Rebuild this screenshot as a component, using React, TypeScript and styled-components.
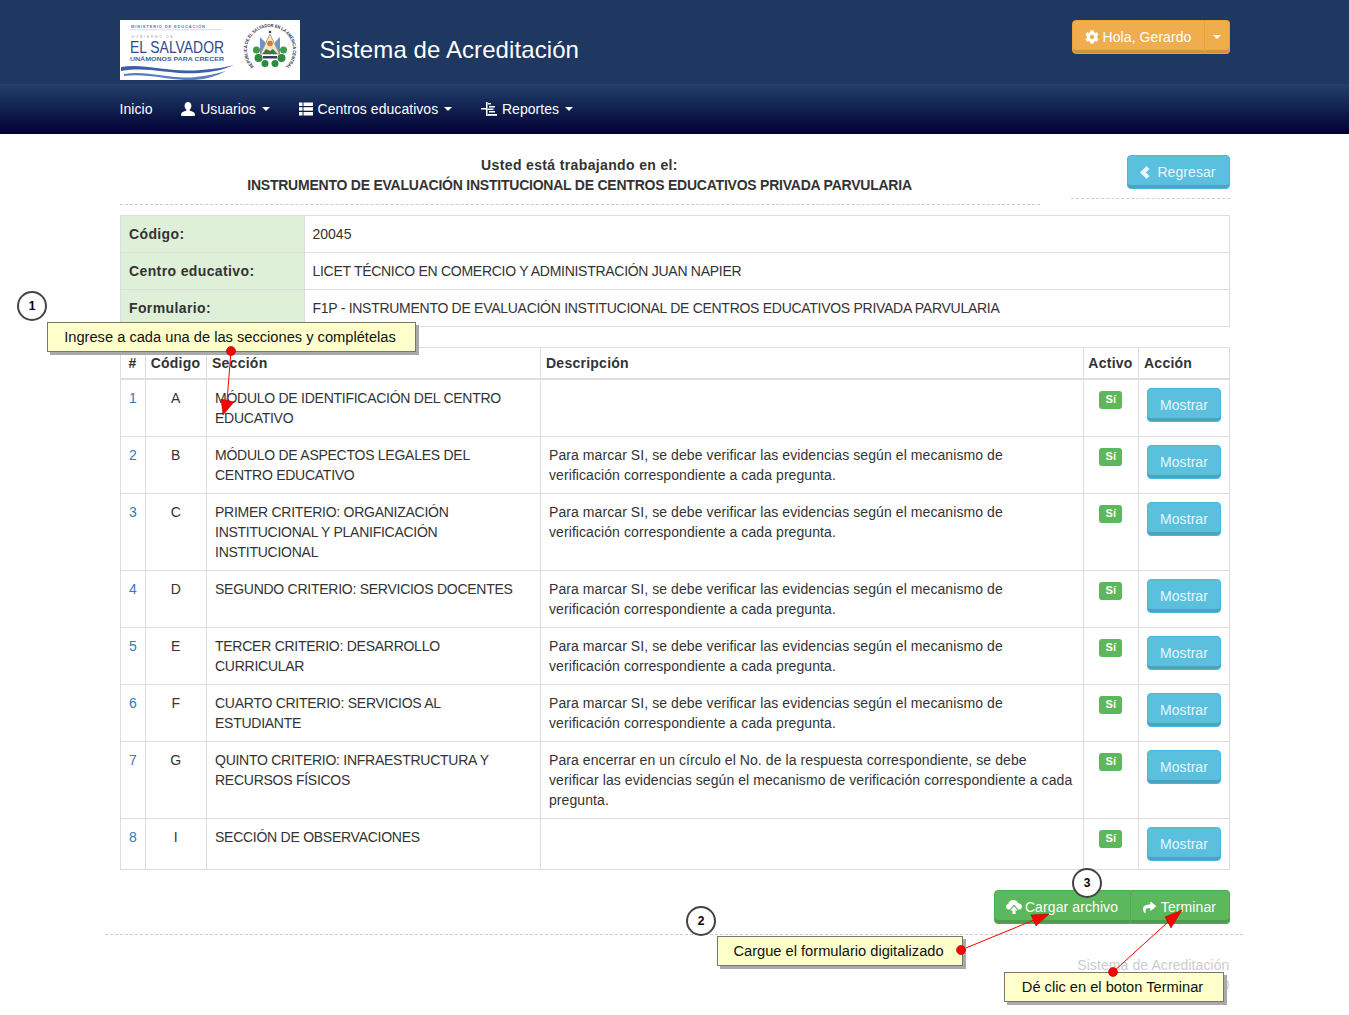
import React from "react";
import styled, { createGlobalStyle } from "styled-components";
import { FaCog, FaShare } from "react-icons/fa";

const Global = createGlobalStyle`
  html, body { margin: 0; padding: 0; background: #fff; }
  body { font-family: "Liberation Sans", Arial, sans-serif; font-size: 14px; line-height: 20px; color: #333; }
`;

const Page = styled.div`
  position: relative;
  width: 1349px;
  height: 1015px;
  overflow: hidden;
`;
const TopBar = styled.header`
  height: 84px;
  background: #1f3861;
`;
const TopInner = styled.div`
  width: 1110px;
  margin: 0 auto;
  padding-top: 20px;
  display: flex;
  align-items: flex-start;
  justify-content: space-between;
`;
const Brand = styled.div`
  display: flex;
  align-items: center;
  gap: 20px;
`;
const LogoBox = styled.svg`
  display: block;
  width: 180px;
  height: 60px;
  background: #fff;
`;
const Title = styled.h1`
  margin: 0;
  font-size: 24px;
  line-height: 60px;
  font-weight: 400;
  letter-spacing: 0.09px;
  color: #fff;
`;
const Split = styled.div`
  display: flex;
  height: 34px;
`;
const OrangePart = styled.div<{ $narrow?: boolean }>`
  height: 34px;
  box-sizing: border-box;
  display: flex;
  align-items: center;
  justify-content: center;
  gap: 4px;
  color: #fff;
  background: #f0ad4e;
  border: 1px solid #eea236;
  box-shadow: inset 0 -3px 0 rgba(0, 0, 0, 0.15);
  letter-spacing: 0.07px;
  width: ${(p) => (p.$narrow ? "25px" : "133px")};
  border-radius: ${(p) => (p.$narrow ? "0 4px 4px 0" : "4px 0 0 4px")};
  ${(p) => (p.$narrow ? "border-left: 0;" : "")}
`;
const Caret = styled.span`
  display: inline-block;
  width: 0;
  height: 0;
  border-top: 4px solid currentColor;
  border-left: 4px solid transparent;
  border-right: 4px solid transparent;
`;
const NavBar = styled.nav`
  height: 50px;
  background: linear-gradient(to bottom, #23406b 0%, #000033 100%);
`;
const NavInner = styled.div`
  width: 1110px;
  margin: 0 auto;
  height: 50px;
  display: flex;
  align-items: center;
  gap: 28.7px;
`;
const NavItem = styled.a`
  display: flex;
  align-items: center;
  gap: 5px;
  color: #fff;
  font-size: 14px;
  letter-spacing: 0.05px;
`;
const NavCaret = styled(Caret)`
  margin-left: 1px;
`;
const Main = styled.main`
  width: 1110px;
  margin: 0 auto;
`;
const HeadRow = styled.div`
  display: flex;
  justify-content: space-between;
  padding-top: 21px;
`;
const HeadText = styled.div`
  width: 920px;
  height: 49px;
  border-bottom: 1px dashed #ccc;
  text-align: center;
  font-weight: 700;
`;
const HeadLine = styled.div<{ $caps?: boolean }>`
  letter-spacing: ${(p) => (p.$caps ? "-0.23px" : "0.36px")};
`;
const HeadAction = styled.div`
  width: 159px;
  height: 43px;
  border-bottom: 1px dashed #ccc;
  display: flex;
  justify-content: flex-end;
`;
const Btn = styled.a<{ $w?: number }>`
  display: flex;
  align-items: center;
  justify-content: center;
  gap: 5px;
  box-sizing: border-box;
  height: 34px;
  width: ${(p) => p.$w ?? 74}px;
  color: #e8f6fb;
  background: #5bc0de;
  border: 1px solid #46b8da;
  border-radius: 4px;
  box-shadow: inset 0 -3px 0 rgba(0, 0, 0, 0.15);
  letter-spacing: 0.07px;
`;
const BackBtn = styled(Btn)`
  gap: 7px;
`;
const InfoTable = styled.table`
  width: 1110px;
  margin-top: 10px;
  border-collapse: collapse;
  table-layout: fixed;
  td {
    border: 1px solid #ddd;
    padding: 8px;
    height: 20px;
  }
`;
const InfoLabel = styled.td`
  width: 167px;
  background: #dff0d8;
  font-weight: 700;
  letter-spacing: 0.38px;
  && { padding-left: 8.5px; padding-right: 7.5px; }
`;
const InfoValue = styled.td<{ $caps?: boolean }>`
  letter-spacing: ${(p) => (p.$caps ? "-0.28px" : "0")};
`;
const DataTable = styled.table`
  width: 1109px;
  margin-top: 20px;
  border-collapse: collapse;
  table-layout: fixed;
  th {
    border: 1px solid #ddd;
    border-bottom-width: 2px;
    padding: 5px 5.5px;
    font-weight: 700;
    text-align: left;
    letter-spacing: 0.25px;
  }
  td {
    border: 1px solid #ddd;
    padding: 8px 8px 8px 8.5px;
    vertical-align: top;
  }
`;
const CenterTh = styled.th`
  && { text-align: center; padding-left: 0; padding-right: 0; }
`;
const CenterTd = styled.td`
  && { text-align: center; }
`;
const SectionCell = styled.td`
  letter-spacing: -0.26px;
  && { padding-right: 20px; }
`;
const DescCell = styled.td`
  letter-spacing: 0.08px;
`;
const RowLink = styled.a`
  color: #337ab7;
`;
const Badge = styled.span`
  display: block;
  box-sizing: border-box;
  width: 23px;
  height: 18px;
  margin: 3px auto 0;
  background: #5cb85c;
  color: #fff;
  border-radius: 3px;
  font-size: 11px;
  font-weight: 700;
  line-height: 16px;
  text-align: center;
`;
const Footer = styled.div`
  display: flex;
  justify-content: flex-end;
  padding-top: 20px;
`;
const GreenGroup = styled.div`
  display: flex;
`;
const GreenBtn = styled(Btn)`
  color: #fff;
  background: #5cb85c;
  border: 1px solid #4cae4c;
  letter-spacing: 0.1px;
  &:first-child { border-radius: 4px 0 0 4px; gap: 3px; }
  &:last-child { border-radius: 0 4px 4px 0; border-left: 0; }
`;
const Rule = styled.div`
  width: 1138px;
  margin: 10px 0 0 105px;
  border-top: 1px dashed #ccc;
`;
const Credits = styled.div`
  width: 1110px;
  margin: 20px auto 0;
  text-align: right;
  color: #ccc;
  line-height: 20px;
  letter-spacing: 0.09px;
`;
const Callout = styled.div<{ $x: number; $y: number; $w: number; $h: number }>`
  position: absolute;
  left: ${(p) => p.$x}px;
  top: ${(p) => p.$y}px;
  width: ${(p) => p.$w}px;
  height: ${(p) => p.$h}px;
  box-sizing: border-box;
  padding: 0 3px 1px 0;
  background: #ffffcc;
  border: 1px solid #777;
  box-shadow: 3px 3px 0 #aaa;
  color: #111;
  font-size: 14.67px;
  display: flex;
  align-items: center;
  justify-content: center;
`;
const StepCircle = styled.div<{ $x: number; $y: number }>`
  position: absolute;
  left: ${(p) => p.$x - 15}px;
  top: ${(p) => p.$y - 15}px;
  width: 30px;
  height: 30px;
  box-sizing: border-box;
  border: 2px solid #444;
  border-radius: 50%;
  background: #fff;
  color: #000;
  font-size: 12px;
  font-weight: 700;
  display: flex;
  align-items: center;
  justify-content: center;
`;
const ArrowLayer = styled.svg`
  position: absolute;
  left: 0;
  top: 0;
  width: 1349px;
  height: 1015px;
  pointer-events: none;
`;

const UserIcon = () => (
  <svg width="14" height="14" viewBox="0 0 14 14" fill="#fff">
    <path d="M7 0c2 0 3.400 1.500 3.400 3.700 0 1.600-.7 3-1.600 3.800v1.200c2.400.6 5 1.600 5 3v2.300H.2V11.700c0-1.400 2.600-2.400 5-3V7.500C4.300 6.700 3.600 5.300 3.600 3.700 3.600 1.500 5 0 7 0z" />
  </svg>
);
const ListIcon = () => (
  <svg width="14" height="14" viewBox="0 0 14 14" fill="#fff">
    <rect x="0" y="0.5" width="3.500" height="3.5" />
    <rect x="4.500" y="0.5" width="9.500" height="3.5" />
    <rect x="0" y="5.2" width="3.500" height="3.5" />
    <rect x="4.500" y="5.2" width="9.500" height="3.5" />
    <rect x="0" y="10" width="3.500" height="3.5" />
    <rect x="4.500" y="10" width="9.500" height="3.5" />
  </svg>
);
const TreeIcon = () => (
  <svg width="16" height="14" viewBox="0 0 16 14" fill="#fff">
    <rect x="5" y="0" width="1.5" height="14" />
    <rect x="0" y="6" width="5" height="1.5" />
    <rect x="6.500" y="1" width="3.500" height="1.500" />
    <rect x="8" y="4" width="6" height="1.500" />
    <rect x="6.500" y="6.500" width="6" height="1.500" />
    <rect x="8" y="9" width="6" height="1.500" />
    <rect x="6.500" y="12" width="9.500" height="1.800" />
  </svg>
);
const BackIcon = () => (
  <svg width="10" height="13" viewBox="0 0 10 13" fill="currentColor">
    <polygon points="6.500,0 9.500,3 6,6.500 9.500,10 6.500,13 0,6.500" />
  </svg>
);
const CloudIcon = () => (
  <svg width="16" height="14" viewBox="0 0 16 14" fill="#fff">
    <path d="M3.300 9.500C1.400 9.500 0 8.300 0 6.700c0-1.400 1-2.500 2.300-2.800C2.700 1.600 4.800 0 7.300 0c2.300 0 4.200 1.300 4.800 3.200 2.200.1 3.900 1.600 3.900 3.400 0 1.300-.8 2.300-2 2.900h-1.500L8 4.500 3.800 9.500z" />
    <path d="M8 6.300l3.700 4.200H9.500V14h-3v-3.500H4.300z" />
  </svg>
);
const Logo = () => (
  <LogoBox viewBox="0 0 180 60">
    <defs>
      <path id="ringPath" d="M134 46.500a23 23 0 1 1 32 0" />
    </defs>
    <text x="11" y="8" fontSize="4" fontWeight="700" fill="#6b7794" textLength="74" lengthAdjust="spacing" fontFamily="Liberation Sans">MINISTERIO DE EDUCACIÓN</text>
    <rect x="10" y="9.500" width="92" height="0.700" fill="#c3cbe0" />
    <text x="11" y="18" fontSize="3.600" fill="#9aa1b4" textLength="42" lengthAdjust="spacing" fontFamily="Liberation Sans">GOBIERNO DE</text>
    <text x="10" y="33" fontSize="16.500" fill="#2e4a8c" textLength="94" lengthAdjust="spacingAndGlyphs" fontFamily="Liberation Sans">EL SALVADOR</text>
    <text x="10" y="41" fontSize="6.200" fontWeight="700" fill="#3f5fa3" textLength="94" lengthAdjust="spacingAndGlyphs" fontFamily="Liberation Sans">UNÁMONOS PARA CRECER</text>
    <path d="M1 47c25-4 45 6 80 3 15-1 25-3 33-5-12 5-20 7-35 8-30 2-50-7-78-2z" fill="#3d5ea8" />
    <path d="M4 54c25-4 45 6 72 3 10-1 20-3 30-6-10 5-18 8-32 9-25 1-45-7-70-4z" fill="#5c7cbc" />
    <text fontSize="4.600" fontWeight="700" fill="#26304f" fontFamily="Liberation Sans">
      <textPath href="#ringPath" startOffset="0" textLength="109" lengthAdjust="spacingAndGlyphs">REPÚBLICA DE EL SALVADOR EN LA AMÉRICA CENTRAL</textPath>
    </text>
    <circle cx="136.500" cy="30" r="3.500" fill="#3f9a4c" />
    <circle cx="163.500" cy="30" r="3.500" fill="#3f9a4c" />
    <circle cx="138.500" cy="38" r="4" fill="#2f8a40" />
    <circle cx="161.500" cy="38" r="4" fill="#2f8a40" />
    <circle cx="145" cy="43.500" r="3.500" fill="#2f8a40" />
    <circle cx="155" cy="43.500" r="3.500" fill="#2f8a40" />
    <path d="M140 17l5 5v12h-5zM160 17l-5 5v12h5z" fill="#6d93cf" />
    <path d="M150 14l9.500 20h-19z" fill="#efe7c8" stroke="#b98a4e" strokeWidth=".8" />
    <circle cx="150" cy="23.500" r="2.800" fill="#d9783d" />
    <path d="M142.500 34l3.500-5 4 2 3-2 4.500 5z" fill="#2e7d4a" />
    <rect x="143" y="36" width="14" height="2.500" fill="#30405f" />
    <circle cx="150" cy="12" r="1.300" fill="#30405f" />
  </LogoBox>
);

const rows = [
  ["1", "A", "MÓDULO DE IDENTIFICACIÓN DEL CENTRO EDUCATIVO", ""],
  ["2", "B", "MÓDULO DE ASPECTOS LEGALES DEL CENTRO EDUCATIVO", "a"],
  ["3", "C", "PRIMER CRITERIO: ORGANIZACIÓN INSTITUCIONAL Y PLANIFICACIÓN INSTITUCIONAL", "a"],
  ["4", "D", "SEGUNDO CRITERIO: SERVICIOS DOCENTES", "a"],
  ["5", "E", "TERCER CRITERIO: DESARROLLO CURRICULAR", "a"],
  ["6", "F", "CUARTO CRITERIO: SERVICIOS AL ESTUDIANTE", "a"],
  ["7", "G", "QUINTO CRITERIO: INFRAESTRUCTURA Y RECURSOS FÍSICOS", "b"],
  ["8", "I", "SECCIÓN DE OBSERVACIONES", ""],
];
const descriptions: Record<string, string> = {
  "": "",
  a: "Para marcar SI, se debe verificar las evidencias según el mecanismo de verificación correspondiente a cada pregunta.",
  b: "Para encerrar en un círculo el No. de la respuesta correspondiente, se debe verificar las evidencias según el mecanismo de verificación correspondiente a cada pregunta.",
};

const arrows = [
  { dot: [231, 351], neck: [227, 401], head: "223,415 221,399 234,402" },
  { dot: [961, 950], neck: [1034, 920], head: "1049,914 1031,915 1036,926" },
  { dot: [1113, 972], neck: [1168, 922], head: "1182,910 1165,917 1171,928" },
];

export default function App() {
  return (
    <Page>
      <Global />
      <TopBar>
        <TopInner>
          <Brand>
            <Logo />
            <Title>Sistema de Acreditación</Title>
          </Brand>
          <Split>
            <OrangePart>
              <FaCog size={14} />
              Hola, Gerardo
            </OrangePart>
            <OrangePart $narrow>
              <Caret />
            </OrangePart>
          </Split>
        </TopInner>
      </TopBar>
      <NavBar>
        <NavInner>
          <NavItem>Inicio</NavItem>
          <NavItem><UserIcon />Usuarios<NavCaret /></NavItem>
          <NavItem><ListIcon />Centros educativos<NavCaret /></NavItem>
          <NavItem><TreeIcon />Reportes<NavCaret /></NavItem>
        </NavInner>
      </NavBar>
      <Main>
        <HeadRow>
          <HeadText>
            <HeadLine>Usted está trabajando en el:</HeadLine>
            <HeadLine $caps>INSTRUMENTO DE EVALUACIÓN INSTITUCIONAL DE CENTROS EDUCATIVOS PRIVADA PARVULARIA</HeadLine>
          </HeadText>
          <HeadAction>
            <BackBtn $w={103}>
              <BackIcon />
              Regresar
            </BackBtn>
          </HeadAction>
        </HeadRow>
        <InfoTable>
          <tbody>
            <tr><InfoLabel>Código:</InfoLabel><InfoValue>20045</InfoValue></tr>
            <tr><InfoLabel>Centro educativo:</InfoLabel><InfoValue $caps>LICET TÉCNICO EN COMERCIO Y ADMINISTRACIÓN JUAN NAPIER</InfoValue></tr>
            <tr><InfoLabel>Formulario:</InfoLabel><InfoValue $caps>F1P - INSTRUMENTO DE EVALUACIÓN INSTITUCIONAL DE CENTROS EDUCATIVOS PRIVADA PARVULARIA</InfoValue></tr>
          </tbody>
        </InfoTable>
        <DataTable>
          <colgroup>
            <col width="25" />
            <col width="61" />
            <col width="334" />
            <col width="543" />
            <col width="55" />
            <col width="91" />
          </colgroup>
          <thead>
            <tr>
              <CenterTh>#</CenterTh>
              <CenterTh>Código</CenterTh>
              <th>Sección</th>
              <th>Descripción</th>
              <CenterTh>Activo</CenterTh>
              <th>Acción</th>
            </tr>
          </thead>
          <tbody>
            {rows.map((r) => (
              <tr key={r[0]}>
                <CenterTd><RowLink>{r[0]}</RowLink></CenterTd>
                <CenterTd>{r[1]}</CenterTd>
                <SectionCell>{r[2]}</SectionCell>
                <DescCell>{descriptions[r[3]]}</DescCell>
                <td><Badge>Sí</Badge></td>
                <td><Btn>Mostrar</Btn></td>
              </tr>
            ))}
          </tbody>
        </DataTable>
        <Footer>
          <GreenGroup>
            <GreenBtn $w={137}><CloudIcon />Cargar archivo</GreenBtn>
            <GreenBtn $w={99}><FaShare size={13} />Terminar</GreenBtn>
          </GreenGroup>
        </Footer>
      </Main>
      <Rule />
      <Credits>
        Sistema de Acreditación
        <br />
        Versión 2.0
      </Credits>
      <ArrowLayer viewBox="0 0 1349 1015">
        {arrows.map((a, i) => (
          <g key={i}>
            <line x1={a.dot[0]} y1={a.dot[1]} x2={a.neck[0]} y2={a.neck[1]} stroke="#f00" strokeWidth="1" />
            <polygon points={a.head} fill="#f00" stroke="#900" strokeWidth=".5" />
          </g>
        ))}
      </ArrowLayer>
      <Callout $x={47} $y={322} $w={369} $h={30}>Ingrese a cada una de las secciones y complételas</Callout>
      <Callout $x={717} $y={936} $w={246} $h={30}>Cargue el formulario digitalizado</Callout>
      <Callout $x={1004} $y={972} $w={220} $h={30}>Dé clic en el boton Terminar</Callout>
      <ArrowLayer viewBox="0 0 1349 1015">
        {arrows.map((a, i) => (
          <circle key={i} cx={a.dot[0]} cy={a.dot[1]} r="4.5" fill="#f00" stroke="#900" strokeWidth=".6" />
        ))}
      </ArrowLayer>
      <StepCircle $x={32} $y={306}>1</StepCircle>
      <StepCircle $x={701} $y={921}>2</StepCircle>
      <StepCircle $x={1087} $y={883}>3</StepCircle>
    </Page>
  );
}
